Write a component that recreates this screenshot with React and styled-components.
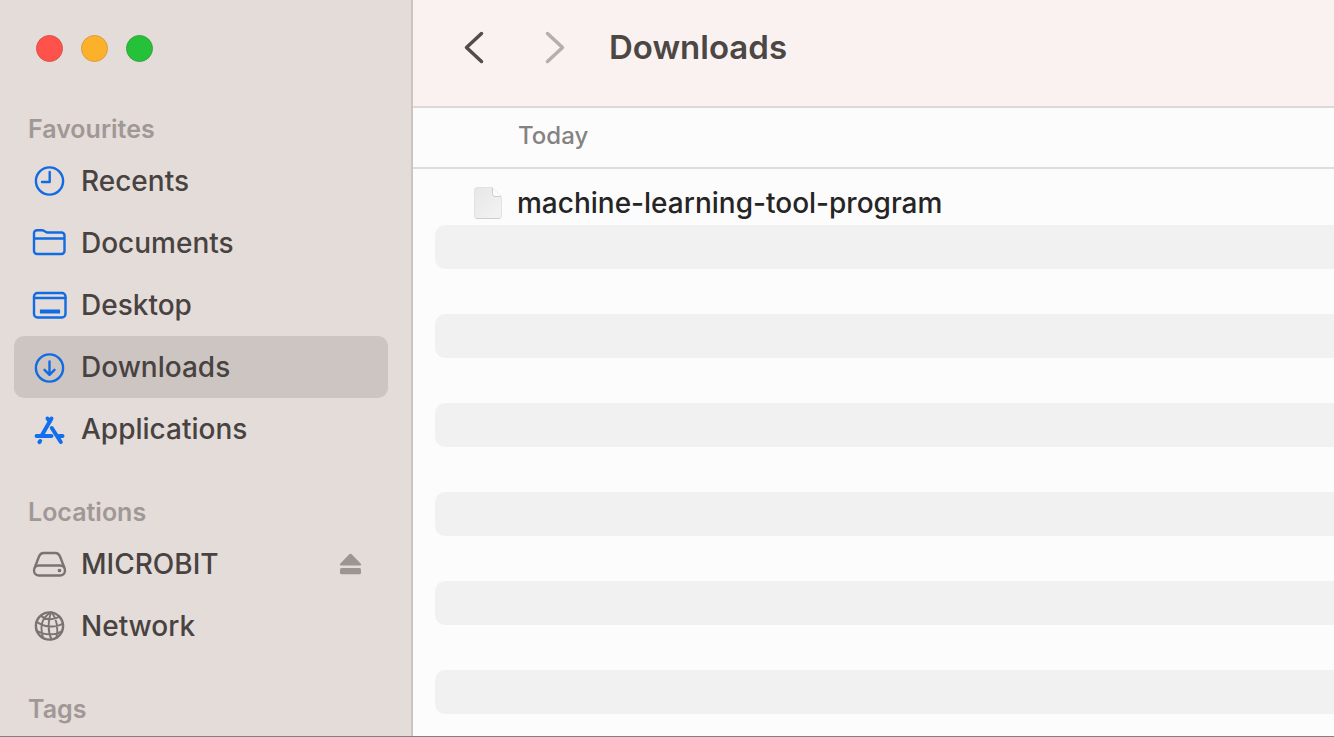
import React from "react";
import styled, { createGlobalStyle } from "styled-components";

const GlobalStyle = createGlobalStyle`
  *, *::before, *::after { box-sizing: border-box; }
  body {
    margin: 0;
    background: #fdfcfc;
    font-family: Inter, "Liberation Sans", sans-serif;
  }
  h1, h2, ul { margin: 0; padding: 0; }
  ul { list-style: none; }
  button { padding: 0; border: 0; background: none; cursor: pointer; }
`;

const Window = styled.div`
  display: grid;
  grid-template-columns: 413px minmax(0, 1fr);
  min-height: 100vh;
  overflow: hidden;
  border-bottom: 1px solid #828080;
`;

const Sidebar = styled.nav`
  padding: 35px 23px 0 14px;
  background: #e4dcd9;
  border-right: 2px solid #cbc4c1;
`;

const TrafficLights = styled.div`
  display: flex;
  gap: 18px;
  height: 73px;
  padding-left: 22px;
`;

const Light = styled.button`
  width: 27px;
  height: 27px;
  border-radius: 50%;
  background: ${(p) => p.$fill};
  border: 1px solid ${(p) => p.$edge};
`;

const Section = styled.section`
  margin-bottom: 31px;
  &:last-child { margin-bottom: 0; }
`;

const SectionTitle = styled.h2`
  height: 42px;
  padding-left: 14px;
  font-size: 25px;
  font-weight: 600;
  line-height: 42px;
  color: #a09896;
`;

const Place = styled.li`
  display: flex;
  align-items: center;
  height: 62px;
  padding: 0 26px 0 17px;
  border-radius: 10px;
  background: ${(p) => (p.$selected ? "#cdc5c2" : "transparent")};
`;

const PlaceLink = styled.a`
  display: flex;
  flex: 1;
  align-items: center;
  gap: 14px;
  font-size: 28px;
  font-weight: 450;
  line-height: 36px;
  color: #484341;
  text-decoration: none;
`;

const PlaceIcon = styled.svg`
  flex: none;
  width: 36px;
  height: 36px;
  fill: none;
  stroke: ${(p) => (p.$muted ? "#797371" : "#116be2")};
  stroke-width: 2.4;
  stroke-linecap: round;
  stroke-linejoin: round;
`;

const EjectButton = styled.button`
  display: flex;
  color: #9d9592;
`;

const Main = styled.main`
  background: #fdfcfc;
`;

const Toolbar = styled.header`
  display: flex;
  align-items: center;
  height: 108px;
  padding: 0 40px 12px;
  background: #faf2f0;
  border-bottom: 2px solid #ded8d6;
`;

const History = styled.div`
  display: flex;
  gap: 36px;
  margin-right: 32px;
`;

const HistoryButton = styled.button`
  display: flex;
  color: ${(p) => (p.disabled ? "#b4aead" : "#524c4a")};
`;

const Title = styled.h1`
  font-size: 33px;
  font-weight: 600;
  line-height: 40px;
  color: #4c4644;
`;

const GroupHeading = styled.h2`
  height: 61px;
  padding-left: 105px;
  border-bottom: 2px solid #dedddd;
  font-size: 24px;
  font-weight: 450;
  line-height: 56px;
  color: #848282;
`;

const FileList = styled.ul`
  padding: 11px 0 0 22px;
`;

const FileRow = styled.li`
  display: flex;
  align-items: center;
  gap: 14px;
  height: ${(p) => (p.$striped ? 44 : 45)}px;
  padding-left: 38px;
  border-radius: 10px 0 0 10px;
  background: ${(p) => (p.$striped ? "#f1f1f1" : "transparent")};
  font-size: 28px;
  font-weight: 450;
  line-height: 44px;
  color: #262525;
`;

const RecentsIcon = () => (
  <PlaceIcon viewBox="0 0 36 36" aria-hidden="true">
    <circle cx="18.5" cy="18" r="13.6" />
    <path d="M18.7 9v10H11" />
  </PlaceIcon>
);

const FolderIcon = () => (
  <PlaceIcon viewBox="0 0 36 36" aria-hidden="true">
    <path d="M3 9.500v-1.300a3 3 0 0 1 3-3h5.200c2.600 0 2.800 2.300 5 2.300H30.500a3 3 0 0 1 3 3V26a3 3 0 0 1-3 3H6a3 3 0 0 1-3-3zM3 13.500h30.500" />
  </PlaceIcon>
);

const DesktopIcon = () => (
  <PlaceIcon viewBox="0 0 36 36" aria-hidden="true">
    <rect x="3" y="6" width="31.500" height="24.500" rx="3.500" />
    <path d="M3 11h31.500" />
    <path d="M9.500 22.500h19q.6 0 .6.600v2.800q0 .6-.6.600h-19q-.6 0-.6-.600v-2.800q0-.6.600-.600z" fill="#116be2" stroke="none" />
  </PlaceIcon>
);

const DownloadsIcon = () => (
  <PlaceIcon viewBox="0 0 36 36" aria-hidden="true">
    <circle cx="18.500" cy="19" r="13.600" />
    <path d="M18.500 12.500v13M13.500 20.800l5 5 5-5" />
  </PlaceIcon>
);

const ApplicationsIcon = () => (
  <PlaceIcon viewBox="0 0 36 36" aria-hidden="true">
    <path
      stroke="#116fee"
      strokeWidth="4"
      d="M20.500 7.500L11 24M16.500 7.500l2.300 3.400M5.600 25H20.500M28 25H31.500M20.800 17L29.800 31M9.200 30l-.8 1.200"
    />
  </PlaceIcon>
);

const DriveIcon = () => (
  <PlaceIcon viewBox="0 0 36 36" $muted aria-hidden="true">
    <path d="M3.200 23L8 10.500Q9.400 7 12.500 7h12q3.100 0 4.500 3.500l4.900 12.500M8 19.500h21a5 5 0 0 1 0 10H8a5 5 0 0 1 0-10z" />
    <circle cx="28.500" cy="24.500" r="1.100" fill="#797371" strokeWidth="1.500" />
  </PlaceIcon>
);

const NetworkIcon = () => (
  <PlaceIcon viewBox="0 0 36 36" $muted aria-hidden="true">
    <circle cx="18.500" cy="18" r="13.600" />
    <path
      strokeWidth="1.900"
      d="M19.500 4.500C11 10 8.500 17 12 30M20 4.500C17 12 16.500 23 20.500 31.500M21 4.500C26 12 27.500 20 25.500 29.500M10 7.500C14 12 23 12.500 28.500 8.500M5.500 13.500C12 19.500 25 20 31.800 15.500M5.500 22.500C13 27.500 25 27.500 31 23"
    />
  </PlaceIcon>
);

const EjectIcon = () => (
  <svg width="23" height="24" viewBox="0 0 23 24" fill="currentColor" aria-hidden="true">
    <path d="M10.300 2.300q1.200-1.200 2.400 0l8.900 9.300q1.300 1.800-.6 2H2q-1.900-.2-.6-2z" />
    <rect x="1" y="16" width="21" height="6.300" rx="1.500" />
  </svg>
);

const Chevron = ({ d }) => (
  <svg
    width="44"
    height="44"
    viewBox="0 0 44 44"
    fill="none"
    stroke="currentColor"
    strokeWidth="3.500"
    strokeLinecap="round"
    strokeLinejoin="round"
    aria-hidden="true"
  >
    <path d={d} />
  </svg>
);

const DocumentIcon = () => (
  <svg width="30" height="34" viewBox="0 0 30 34" aria-hidden="true">
    <defs>
      <linearGradient id="paper" x1="0" y1="0" x2="1" y2="1">
        <stop offset="0" stopColor="#e8e7e7" />
        <stop offset="1" stopColor="#f3f3f3" />
      </linearGradient>
    </defs>
    <path
      d="M4 1.500H19.500L28.500 10.500V30q0 2.500-2.500 2.500H4Q1.500 32.500 1.500 30V4Q1.500 1.500 4 1.500z"
      fill="url(#paper)"
      stroke="#e3e2e2"
    />
    <path d="M3 32.500h24" stroke="#cfcece" />
    <path d="M19.500 1.500v6.500q0 2.500 2.500 2.500h6.500z" fill="#fafafa" />
    <path d="M19.500 2v6q0 2.500 2.500 2.500h6" fill="none" stroke="#cfcece" />
  </svg>
);

const favourites = [
  { name: "Recents", Icon: RecentsIcon },
  { name: "Documents", Icon: FolderIcon },
  { name: "Desktop", Icon: DesktopIcon },
  { name: "Downloads", Icon: DownloadsIcon, selected: true },
  { name: "Applications", Icon: ApplicationsIcon },
];

const locations = [
  { name: "MICROBIT", Icon: DriveIcon, ejectable: true },
  { name: "Network", Icon: NetworkIcon },
];

const emptyRows = Array.from({ length: 11 }, (_, i) => i);

function PlaceSection({ title, places = [] }) {
  return (
    <Section>
      <SectionTitle>{title}</SectionTitle>
      {places.length > 0 && (
        <ul>
          {places.map(({ name, Icon, selected, ejectable }) => (
            <Place key={name} $selected={selected}>
              <PlaceLink href={`#${name}`} aria-current={selected ? "page" : undefined}>
                <Icon />
                {name}
              </PlaceLink>
              {ejectable && (
                <EjectButton aria-label={`Eject ${name}`}>
                  <EjectIcon />
                </EjectButton>
              )}
            </Place>
          ))}
        </ul>
      )}
    </Section>
  );
}

export default function App() {
  return (
    <>
      <GlobalStyle />
      <Window>
        <Sidebar>
          <TrafficLights>
            <Light $fill="#ff524b" $edge="#d9504a" aria-label="Close" />
            <Light $fill="#fdb12a" $edge="#d89c3a" aria-label="Minimise" />
            <Light $fill="#25c138" $edge="#35a341" aria-label="Zoom" />
          </TrafficLights>
          <PlaceSection title="Favourites" places={favourites} />
          <PlaceSection title="Locations" places={locations} />
          <PlaceSection title="Tags" />
        </Sidebar>
        <Main>
          <Toolbar>
            <History>
              <HistoryButton aria-label="Back">
                <Chevron d="M28.500 8.500L13.500 22.500l15 14" />
              </HistoryButton>
              <HistoryButton aria-label="Forward" disabled>
                <Chevron d="M14.500 8.500L29.500 22.500l-15 14" />
              </HistoryButton>
            </History>
            <Title>Downloads</Title>
          </Toolbar>
          <GroupHeading>Today</GroupHeading>
          <FileList>
            <FileRow>
              <DocumentIcon />
              machine-learning-tool-program
            </FileRow>
            {emptyRows.map((i) => (
              <FileRow key={i} $striped={i % 2 === 0} aria-hidden="true" />
            ))}
          </FileList>
        </Main>
      </Window>
    </>
  );
}
